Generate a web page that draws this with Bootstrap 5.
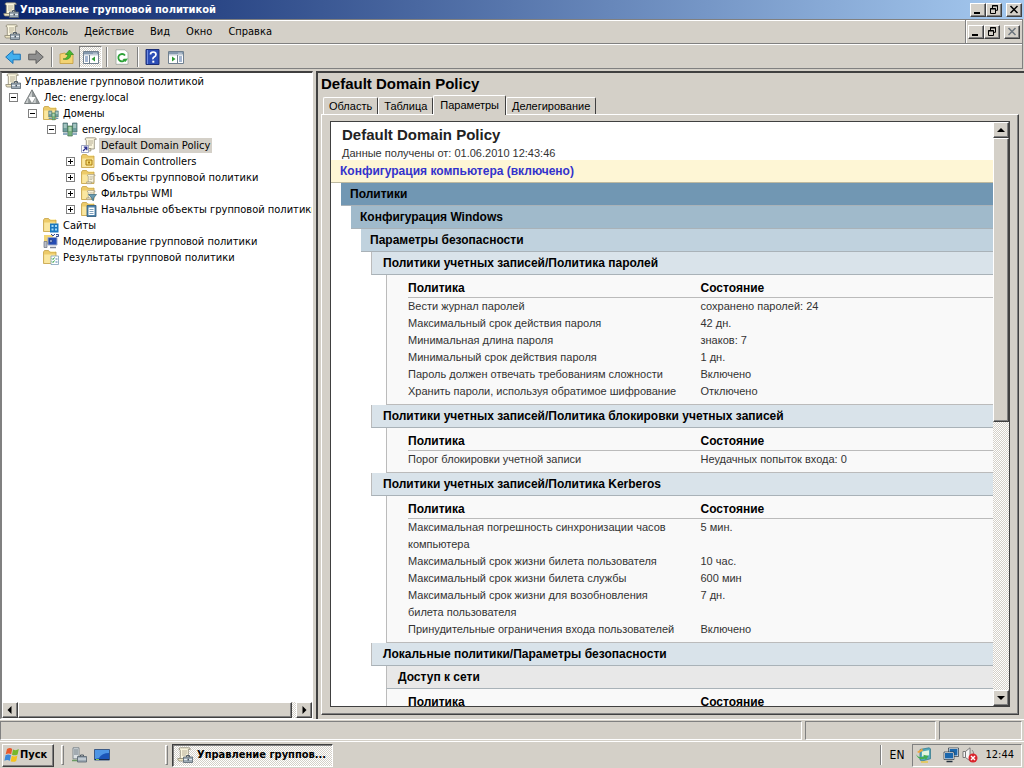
<!DOCTYPE html>
<html lang="ru">
<head>
<meta charset="utf-8">
<meta name="viewport" content="width=device-width, initial-scale=1">
<title>Управление групповой политикой</title>
<link href="https://cdn.jsdelivr.net/npm/bootstrap@5.3.0/dist/css/bootstrap.min.css" rel="stylesheet">
<style>
:root{--face:#d4d0c8;--shade:#808080;--deep:#404040;--ui:"DejaVu Sans Condensed","DejaVu Sans",sans-serif;--doc:"Liberation Sans",Arial,sans-serif}
body{font-family:var(--ui);font-size:11px;line-height:16px;color:#000;background:var(--face)}
body>*{flex-shrink:0}
button{font:inherit;color:inherit;background:none;border:0;padding:0;white-space:nowrap;text-align:left}
svg{display:block;flex:none}
.ico{width:16px;height:16px}
.raised{background:var(--face);border:1px solid;border-color:#fff var(--deep) var(--deep) #fff;box-shadow:inset -1px -1px 0 var(--shade)}
.dither{background:repeating-conic-gradient(#fff 0 25%,var(--face) 0 50%) 0 0/2px 2px}
.titlebar{height:19px;background:linear-gradient(90deg,#0a246a,#a6caf0);color:#fff;font-weight:bold;padding:0 2px 0 3px}
.titlebar span{margin-left:1px}
.winbtn{width:16px;height:14px;display:flex;align-items:center;justify-content:center}
.rebar{border-top:1px solid var(--shade);box-shadow:inset 0 1px 0 #fff;border-bottom:1px solid var(--shade);margin-right:1px;border-right:1px solid var(--shade)}
.menurow{height:24px;border-bottom:1px solid var(--shade);padding-left:4px}
.menurow nav{gap:16px;margin-left:5px}
.mdi{height:23px;border-left:1px solid var(--shade);padding:0 2px;box-shadow:inset 1px 0 0 #fff}
.toolrow{height:24px;border-top:1px solid #fff;padding-left:5px;gap:7px}
.toolgroup{gap:4px}
.pressed{width:23px;height:22px;padding-left:3px}
.vsep{width:2px;height:20px;border-left:1px solid var(--shade);border-right:1px solid #fff}
.toolrow .vsep{margin-right:-1px}
.pressed{border:1px solid;border-color:var(--shade) #fff #fff var(--shade)}
.panes{padding-top:2px;gap:3px;border-bottom:1px solid #fff}
.pane{border:2px solid;border-color:var(--deep) #fff #fff var(--shade)}
.treepane{flex:0 0 313px;background:#fff;border-width:2px 1px 1px 2px}
.tree{margin:0;padding:0;list-style:none;overflow:hidden}
.tree ul{list-style:none;margin:0;padding-left:19px}
.node{display:flex;align-items:center;height:16px;padding-left:7px}
.tree>li>.node{padding-left:3px}
.expander{width:9px;height:9px;border:1px solid var(--shade);display:flex;align-items:center;justify-content:center;margin-right:6px;flex:none;background:#fff}
.noexp{width:15px;flex:none}
.node .caption{padding:0 2px;margin-left:2px;height:15px;line-height:15px}
.node .caption.sel{background:var(--face)}
.hbar{height:16px}.sbtn{width:16px;height:16px;display:flex;align-items:center;justify-content:center;flex:none}
.detail{border-width:2px 0 0 2px;border-color:var(--deep);padding:0 5px 4px 3px}
.dochead{font:bold 15px/22px var(--doc);margin:0}
.tabs{font-family:var(--doc);padding-left:2px;height:19px}
.tabs button{height:17px;border:solid;border-width:1px 1px 0;border-color:#fff var(--deep) #fff #fff;border-radius:2px 2px 0 0;padding:0 5px;font-size:11px;line-height:15px}
.tabs button.active{height:20px;margin-bottom:-1px;padding:0 6px;background:var(--face);position:relative}
.tabpage{border:1px solid;border-color:#fff var(--deep) var(--deep) #fff;box-shadow:inset -1px -1px 0 var(--shade);padding:6px 8px 7px}
.viewer{border:1px solid var(--deep);background:#fff}
.vbar{width:16px}
.report{font:11px/17px var(--doc);color:#333;overflow:hidden}
.report h2{font:bold 15px/25px var(--doc);color:#222;margin:0 0 0 11px}
.stamp{margin:0 0 0 11px;line-height:13px}
.bar{height:23px;line-height:22px;font-weight:bold;font-size:12px;color:#000;border-bottom:1px solid #a9b2b8;margin:0;padding-left:9px}
.c0{background:#fef6d5;color:#3333cc;border-color:#bdb9a0}.c1{background:#7197b3;margin-left:10px}.c2{background:#a0bacb;margin-left:20px}.c3{background:#c0d2de;margin-left:30px}
.c4{background:#d9e3ea;margin-left:40px;padding-left:11px;border-left:1px solid #bbb}
.c5{background:#e8e8e8;margin-left:55px;padding-left:11px;border-left:1px solid #bbb}
.block{margin-left:55px;padding:4px 0 4px 21px;background:#f9f9f9;border-left:1px solid #bbb;border-bottom:1px solid #bbb}
.block table{width:100%;table-layout:fixed;border-collapse:separate;border-spacing:0}
.block th{height:19px;line-height:18px;padding:0;border-bottom:1px solid #bbb;color:#000;font-size:12px}
.block td{padding:0 20px 0 0;vertical-align:top;line-height:17px}
.statusbar{height:21px;gap:3px;padding:1px 2px 1px 0}
.cell{border:1px solid;border-color:var(--shade) #fff #fff var(--shade)}
.cell-mid{width:131px}.cell-end{width:83px}
.taskbar{height:27px;border-top:1px solid #fff;padding:0 2px}
.grip{width:3px;height:20px;border:1px solid;border-color:#fff var(--shade) var(--shade) #fff}
.start{width:52px;height:23px;font-weight:bold;padding-left:1px}
.quick{gap:7px;margin:0 55px 0 7px}
.launch{gap:4px}
.task{width:161px;height:23px;font-weight:bold;border:1px solid;border-color:var(--deep) #fff #fff var(--deep);box-shadow:inset 1px 1px 0 var(--shade);padding-left:4px}
.lang{font-size:12px;padding:0 8px}
.tray{height:23px;border:1px solid;border-color:var(--shade) #fff #fff var(--shade);padding:0 7px 0 3px;gap:3px}
</style>
</head>
<body class="vh-100 d-flex flex-column overflow-hidden">
<svg width="0" height="0" class="position-absolute" aria-hidden="true">
<defs>
<symbol id="scroll" viewBox="0 0 16 16"><path d="M3.500 .8h8.300q1.500 0 1.500 1.600h-2v9.600h-8V3.500q0-1-1.300-1Q2 .8 3.500.8z" fill="#fbf6df" stroke="#8b8674" stroke-width=".8"/><path d="M5 4h5M5 6h5M5 8h4" stroke="#a39c84" stroke-width=".8"/><path d="M.8 11.500h7v2.500H2Q.8 14 .8 11.500z" fill="#eee6c4" stroke="#8b8674" stroke-width=".8"/></symbol>
<symbol id="gpmc" viewBox="0 0 16 16"><use href="#scroll"/><path d="M9.500 10V8.500h3V10" fill="none" stroke="#4d5964"/><path d="M6.500 10h9v5.500h-9z" fill="#9daab5" stroke="#586570" stroke-width=".8"/><path d="M7 12.500h8" stroke="#e3e9ee"/><path d="M10.500 11.800h1.500v1.700h-1.500z" fill="#45515c"/></symbol>
<symbol id="gpolink" viewBox="0 0 16 16"><g transform="translate(2)"><use href="#scroll"/></g><path d="M.5 8.500h7v7h-7z" fill="#fff" stroke="#8a93b5" stroke-width=".8"/><path d="M2 14l3.300-3.300M2.800 10.200h3v3" fill="none" stroke="#2a2f8f" stroke-width="1.300"/></symbol>
<symbol id="forest" viewBox="0 0 16 16"><path d="M8 .8L15.500 14.500H.5z" fill="#8f9596" stroke="#666c6d" stroke-width=".8"/><path d="M8 2L8 8H4.800zM4.200 8.500V14H1.500zM11.800 8.500V14H9z" fill="#c9cdcd"/><path d="M4.500 8h7L8 14z" fill="#fff"/></symbol>
<symbol id="folder" viewBox="0 0 16 16"><path d="M.5 14.500V3l1-1.500h4l1.200 1.500H13v11.500z" fill="#edcb69" stroke="#c5a144" stroke-width=".8"/><path d="M1.200 14V5.500h11.200V14z" fill="#fae7a0"/><path d="M7.500 2.500h5" stroke="#fff4c6"/></symbol>
<symbol id="servers" viewBox="0 0 16 16"><path d="M1 2h4.500v9H1zM10.500 2H15v9h-4.500z" fill="#6f9e9c" stroke="#48676b" stroke-width=".7"/><path d="M5.800 5h4.500v10H5.800z" fill="#78b37d" stroke="#3f6f52" stroke-width=".7"/><path d="M1.700 4h3M1.700 6h3M11.200 4h3M11.200 6h3M6.500 7h3M6.500 9h3" stroke="#e5f4ec" stroke-width=".9"/><path d="M1 13h4.500M10.500 13H15" stroke="#6c93ad" stroke-width="1.600"/></symbol>
<symbol id="fdomains" viewBox="0 0 16 16"><use href="#folder"/><svg x="5" y="4" width="11" height="12"><use href="#servers"/></svg></symbol>
<symbol id="fou" viewBox="0 0 16 16"><use href="#folder"/><path d="M5 7h6v5H5z" fill="#f8df73" stroke="#a87b12"/><path d="M7 8.500h2v2H7z" fill="#a87b12"/></symbol>
<symbol id="fgpo" viewBox="0 0 16 16"><use href="#folder"/><svg x="5" y="5" width="11" height="11"><use href="#scroll"/></svg></symbol>
<symbol id="fwmi" viewBox="0 0 16 16"><use href="#fgpo"/><path d="M7.500 9.500h8l-3 3.500v2.800l-1.500-1V13z" fill="#6a9bb0" stroke="#3b6c83" stroke-width=".7"/></symbol>
<symbol id="fstarter" viewBox="0 0 16 16"><use href="#folder"/><path d="M6 4.500h9v11H6z" fill="#4e84ac" stroke="#2f5878" stroke-width=".8"/><path d="M7.500 6.500h6V14h-6z" fill="#fff"/><path d="M8.500 8.500h4M8.500 10.500h4M8.500 12.500h4" stroke="#5d88a9" stroke-width=".8"/></symbol>
<symbol id="fsites" viewBox="0 0 16 16"><use href="#folder"/><path d="M7 6.500h8.500v9H7z" fill="#1976bd"/><path d="M8.500 8h2v2h-2zM12 8h2v2h-2zM8.500 11.500h2v2h-2zM12 11.500h2v2h-2z" fill="#9dd7f8"/></symbol>
<symbol id="fmodel" viewBox="0 0 16 16"><path d="M1 2h9v9H1z" fill="#f2d576"/><path d="M5 4.500h9V12H5z" fill="#254cb4" stroke="#9ba7c6"/><path d="M8 1l2 2 2-2M13 1.500h2.500v2H13M7 6v4l3-2z" stroke="#233a80" fill="#dfe9ff" stroke-width=".9"/><path d="M1 8.500h3v6H1z" fill="#b9bec8" stroke="#687083" stroke-width=".7"/><path d="M7 14.500h6" stroke="#7d8495" stroke-width="1.500"/></symbol>
<symbol id="fresult" viewBox="0 0 16 16"><use href="#folder"/><path d="M8 7h7.500v8.500H8z" fill="#fff" stroke="#7fa0b7" stroke-width=".8"/><path d="M9 9.500l1 1 1.500-2M9 12.500l1 1 1.500-2" fill="none" stroke="#229a38"/><path d="M12.500 10h2M12.500 13h2" stroke="#4d79aa"/></symbol>
<symbol id="arrow" viewBox="0 0 16 16"><path d="M.7 8L8 1.500v3.700h7.300v5.600H8v3.700z" stroke-width="1"/></symbol>
<symbol id="upfolder" viewBox="0 0 16 16"><path d="M1 14.500V5l5-1 1.500 1.500H14v9z" fill="#f3d373" stroke="#c39c3c" stroke-width=".8"/><path d="M4 10q4 0 5-4.500H6.500L10.500 1l4 4.500H12Q11 12 4 10z" fill="#49b82f" stroke="#2c8522" stroke-width=".6"/></symbol>
<symbol id="winpane" viewBox="0 0 16 16"><path d="M.5 2.500h15v12H.5z" fill="#fff" stroke="#70808f"/><path d="M1 3h14v2.500H1z" fill="#8599ae"/><path d="M10.500 4.200h1M12.500 4.200h1" stroke="#fff"/><path d="M1 6h14" stroke="#c4ced8"/></symbol>
<symbol id="treeview" viewBox="0 0 16 16"><use href="#winpane"/><path d="M6.500 6v8" stroke="#70808f"/><path d="M2 8h3M2 10h3M2 12h3" stroke="#4a6da1"/><path d="M12 7.500v5L8.500 10z" fill="#2d9b34"/></symbol>
<symbol id="actionview" viewBox="0 0 16 16"><use href="#winpane"/><path d="M9.500 6v8" stroke="#70808f"/><path d="M11 8h3M11 10h3M11 12h3" stroke="#4a6da1"/><path d="M4 7.500v5L7.500 10z" fill="#2d9b34"/></symbol>
<symbol id="refresh" viewBox="0 0 16 16"><path d="M2 .8h9l3 3v11.500H2z" fill="#fff" stroke="#9aa59b" stroke-width=".8"/><path d="M11 6.500A3.700 3.700 0 1 0 11.500 10" fill="none" stroke="#2da137" stroke-width="1.800"/><path d="M8.500 10l5.500-.5-2.500 3.500z" fill="#2da137"/></symbol>
<symbol id="help" viewBox="0 0 16 16"><path d="M1 .5h13v15H1z" fill="#2c4db6" stroke="#1c2e76"/><path d="M2.500 1v14" stroke="#6f8ce0"/><path d="M5.500 5.500Q5.500 3 8.200 3T11 5.500Q11 7 9.200 8T8.300 10.200" fill="none" stroke="#fff" stroke-width="1.700"/><path d="M7.300 11.700h2v2h-2z" fill="#fff"/></symbol>
<symbol id="i-min" viewBox="0 0 10 9"><path d="M1 7h6v2H1z" fill="#000"/></symbol>
<symbol id="i-res" viewBox="0 0 10 9"><path d="M3.500 3V.5h5v4.800H7M3 1h6M1.500 3.500h5v5h-5zM1 4h6" fill="none" stroke="#000"/></symbol>
<symbol id="i-x" viewBox="0 0 10 9"><path d="M1.500 1l7 7M8.500 1l-7 7" stroke="currentColor" stroke-width="1.500"/></symbol>
<symbol id="flag" viewBox="0 0 16 16"><path d="M3 2q3-1.800 5.200 0L7.200 7.200q-2.700-1.500-5.500 0z" fill="#e8592b"/><path d="M9 2.500q3 1.500 5.800-.4l-1.200 5.400q-2.800 1.600-5.600.2z" fill="#77b72b"/><path d="M1.500 8.300q2.800-1.600 5.500 0l-1.100 5.400q-2.700-1.500-5.500 0z" fill="#3b88d8"/><path d="M7.800 8.800q2.800 1.400 5.600-.3l-1.200 5.400q-2.800 1.600-5.500.3z" fill="#f6c21c"/></symbol>
<symbol id="srvmgr" viewBox="0 0 16 16"><path d="M2 .8h6v11H2z" fill="#dce1e4" stroke="#6b767e" stroke-width=".8"/><path d="M3 3h4M3 5h4M3 7h4" stroke="#69757e"/><path d="M1 13.500h6" stroke="#6b9b63" stroke-width="1.500"/><path d="M9.500 9.500V8h3v1.500" fill="none" stroke="#4d5964"/><path d="M6.500 9.500h9v5.500h-9z" fill="#9daab5" stroke="#586570" stroke-width=".8"/><path d="M7 12h8" stroke="#e3e9ee"/></symbol>
<symbol id="desk" viewBox="0 0 16 16"><path d="M.5 2.500h15v10.500H.5z" fill="#1b55b8" stroke="#3d5b86"/><path d="M1 3h14v3Q8 6 5 11L1 12z" fill="#4e96e6"/><path d="M1 12.500h14" stroke="#1b2c4e"/><path d="M2 12.500h3" stroke="#7ec850"/></symbol>
<symbol id="vmtray" viewBox="0 0 16 16"><path d="M4 2.500l9-1.700 1.500 1v10L6 14l-2-1z" fill="#56a9bd" stroke="#2c7488" stroke-width=".7"/><path d="M6 4.500l7-1.300v5L6 9.500z" fill="#e5f6df"/><path d="M0 7q2 4.500 8 2.500l-.7-1.800 5 1.300-2.300 4-1-1.500Q2 14 0 7z" fill="#43ad53"/><path d="M1 5l5-3.500 1 2.300L3 6z" fill="#efa43b"/><path d="M5 15h7" stroke="#e8c84a" stroke-width="1.500"/></symbol>
<symbol id="net" viewBox="0 0 16 16"><path d="M6 1.500h9V9H6z" fill="#1b67ac" stroke="#fff"/><path d="M5.500 1h10v8.500h-10z" fill="none" stroke="#24303c" stroke-width=".7"/><path d="M1.500 5.500h9V12h-9z" fill="#1b67ac" stroke="#fff"/><path d="M1 5h10v7.500H1z" fill="none" stroke="#24303c" stroke-width=".7"/><path d="M3.500 14.500h6" stroke="#24303c" stroke-width="1.500"/></symbol>
<symbol id="mute" viewBox="0 0 16 16"><path d="M1 4.500h2.500L8 .8v13L3.500 10.500H1z" fill="#f5f5f5" stroke="#707070" stroke-width=".9"/><path d="M3.500 4.500v6" stroke="#777"/><path d="M10 3q2 2 1.500 4" fill="none" stroke="#888"/><circle cx="11" cy="11" r="4.500" fill="#d9242c"/><path d="M9 9l4 4M13 9l-4 4" stroke="#fff" stroke-width="1.400"/></symbol>
</defs>
</svg>

<header class="titlebar d-flex align-items-center">
  <svg class="ico"><use href="#gpmc"/></svg><span class="flex-grow-1">Управление групповой политикой</span>
  <button class="winbtn raised" aria-label="Свернуть"><svg width="10" height="9"><use href="#i-min"/></svg></button>
  <button class="winbtn raised" aria-label="Восстановить"><svg width="10" height="9"><use href="#i-res"/></svg></button>
  <button class="winbtn raised ms-1 text-black" aria-label="Закрыть"><svg width="10" height="9"><use href="#i-x"/></svg></button>
</header>

<div class="rebar">
  <div class="menurow d-flex align-items-center">
    <svg class="ico"><use href="#gpmc"/></svg>
    <nav class="d-flex flex-grow-1"><button>Консоль</button><button>Действие</button><button>Вид</button><button>Окно</button><button>Справка</button></nav>
    <div class="mdi d-flex align-items-center">
      <button class="winbtn raised" aria-label="Свернуть окно"><svg width="10" height="9"><use href="#i-min"/></svg></button>
      <button class="winbtn raised" aria-label="Восстановить окно"><svg width="10" height="9"><use href="#i-res"/></svg></button>
      <button class="winbtn raised ms-1 text-secondary" aria-label="Закрыть окно" disabled><svg width="10" height="9"><use href="#i-x"/></svg></button>
    </div>
  </div>
  <div class="toolrow d-flex align-items-center">
    <button aria-label="Назад"><svg class="ico" fill="#43b0ee" stroke="#1c72b4"><use href="#arrow"/></svg></button>
    <button aria-label="Вперед"><svg class="ico" fill="#8f8f8f" stroke="#5e5e5e"><g transform="translate(16) scale(-1 1)"><use href="#arrow" width="16" height="16"/></g></svg></button>
    <span class="vsep"></span>
    <div class="toolgroup d-flex align-items-center">
      <button aria-label="Вверх"><svg class="ico"><use href="#upfolder"/></svg></button>
      <button aria-label="Дерево консоли" class="pressed dither"><svg class="ico"><use href="#treeview"/></svg></button>
      <span class="vsep"></span>
    </div>
    <button aria-label="Обновить"><svg class="ico"><use href="#refresh"/></svg></button>
    <span class="vsep"></span>
    <button aria-label="Справка"><svg class="ico"><use href="#help"/></svg></button>
    <button aria-label="Панель действий"><svg class="ico"><use href="#actionview"/></svg></button>
  </div>
</div>

<main class="panes d-flex flex-grow-1 flex-shrink-1 overflow-hidden">
  <aside class="pane treepane d-flex flex-column overflow-hidden">
    <ul class="tree flex-grow-1">
      <li><div class="node"><svg class="ico"><use href="#gpmc"/></svg><button class="caption">Управление групповой политикой</button></div>
        <ul class="ps-0">
          <li><div class="node"><button class="expander" aria-label="Свернуть"><svg width="7" height="7"><path d="M1 3.500h5" stroke="#000"/></svg></button><svg class="ico"><use href="#forest"/></svg><button class="caption">Лес: energy.local</button></div>
            <ul>
              <li><div class="node"><button class="expander" aria-label="Свернуть"><svg width="7" height="7"><path d="M1 3.500h5" stroke="#000"/></svg></button><svg class="ico"><use href="#fdomains"/></svg><button class="caption">Домены</button></div>
                <ul>
                  <li><div class="node"><button class="expander" aria-label="Свернуть"><svg width="7" height="7"><path d="M1 3.500h5" stroke="#000"/></svg></button><svg class="ico"><use href="#servers"/></svg><button class="caption">energy.local</button></div>
                    <ul>
                      <li><div class="node"><span class="noexp"></span><svg class="ico"><use href="#gpolink"/></svg><button class="caption sel">Default Domain Policy</button></div></li>
                      <li><div class="node"><button class="expander" aria-label="Развернуть"><svg width="7" height="7"><path d="M1 3.500h5M3.500 1v5" stroke="#000"/></svg></button><svg class="ico"><use href="#fou"/></svg><button class="caption">Domain Controllers</button></div></li>
                      <li><div class="node"><button class="expander" aria-label="Развернуть"><svg width="7" height="7"><path d="M1 3.500h5M3.500 1v5" stroke="#000"/></svg></button><svg class="ico"><use href="#fgpo"/></svg><button class="caption">Объекты групповой политики</button></div></li>
                      <li><div class="node"><button class="expander" aria-label="Развернуть"><svg width="7" height="7"><path d="M1 3.500h5M3.500 1v5" stroke="#000"/></svg></button><svg class="ico"><use href="#fwmi"/></svg><button class="caption">Фильтры WMI</button></div></li>
                      <li><div class="node"><button class="expander" aria-label="Развернуть"><svg width="7" height="7"><path d="M1 3.500h5M3.500 1v5" stroke="#000"/></svg></button><svg class="ico"><use href="#fstarter"/></svg><button class="caption">Начальные объекты групповой политики</button></div></li>
                    </ul></li>
                </ul></li>
              <li><div class="node"><span class="noexp"></span><svg class="ico"><use href="#fsites"/></svg><button class="caption">Сайты</button></div></li>
              <li><div class="node"><span class="noexp"></span><svg class="ico"><use href="#fmodel"/></svg><button class="caption">Моделирование групповой политики</button></div></li>
              <li><div class="node"><span class="noexp"></span><svg class="ico"><use href="#fresult"/></svg><button class="caption">Результаты групповой политики</button></div></li>
            </ul></li>
        </ul></li>
    </ul>
    <div class="hbar d-flex dither flex-shrink-0">
      <button class="sbtn raised" aria-label="Влево"><svg width="8" height="8"><path d="M5.500 0v8l-4-4z"/></svg></button>
      <div class="raised flex-grow-1 me-1"></div>
      <button class="sbtn raised" aria-label="Вправо"><svg width="8" height="8"><path d="M2.500 0v8l4-4z"/></svg></button>
    </div>
  </aside>

  <section class="pane detail d-flex flex-column flex-grow-1 overflow-hidden">
    <h1 class="dochead">Default Domain Policy</h1>
    <div class="tabs d-flex align-items-end flex-shrink-0" role="tablist">
      <button role="tab">Область</button><button role="tab">Таблица</button><button role="tab" class="active" aria-selected="true">Параметры</button><button role="tab">Делегирование</button>
    </div>
    <div class="tabpage d-flex flex-grow-1 overflow-hidden">
      <div class="viewer d-flex flex-grow-1 overflow-hidden">
        <article class="report flex-grow-1">
          <h2>Default Domain Policy</h2>
          <p class="stamp">Данные получены от: 01.06.2010 12:43:46</p>
          <h3 class="bar c0">Конфигурация компьютера (включено)</h3>
          <h4 class="bar c1">Политики</h4>
          <h5 class="bar c2">Конфигурация Windows</h5>
          <h6 class="bar c3">Параметры безопасности</h6>
          <h6 class="bar c4">Политики учетных записей/Политика паролей</h6>
          <div class="block"><table>
            <thead><tr><th>Политика</th><th>Состояние</th></tr></thead>
            <tbody>
            <tr><td>Вести журнал паролей</td><td>сохранено паролей: 24</td></tr>
            <tr><td>Максимальный срок действия пароля</td><td>42 дн.</td></tr>
            <tr><td>Минимальная длина пароля</td><td>знаков: 7</td></tr>
            <tr><td>Минимальный срок действия пароля</td><td>1 дн.</td></tr>
            <tr><td>Пароль должен отвечать требованиям сложности</td><td>Включено</td></tr>
            <tr><td>Хранить пароли, используя обратимое шифрование</td><td>Отключено</td></tr>
            </tbody></table></div>
          <h6 class="bar c4">Политики учетных записей/Политика блокировки учетных записей</h6>
          <div class="block"><table>
            <thead><tr><th>Политика</th><th>Состояние</th></tr></thead>
            <tbody><tr><td>Порог блокировки учетной записи</td><td>Неудачных попыток входа: 0</td></tr></tbody></table></div>
          <h6 class="bar c4">Политики учетных записей/Политика Kerberos</h6>
          <div class="block"><table>
            <thead><tr><th>Политика</th><th>Состояние</th></tr></thead>
            <tbody>
            <tr><td>Максимальная погрешность синхронизации часов компьютера</td><td>5 мин.</td></tr>
            <tr><td>Максимальный срок жизни билета пользователя</td><td>10 час.</td></tr>
            <tr><td>Максимальный срок жизни билета службы</td><td>600 мин</td></tr>
            <tr><td>Максимальный срок жизни для возобновления билета пользователя</td><td>7 дн.</td></tr>
            <tr><td>Принудительные ограничения входа пользователей</td><td>Включено</td></tr>
            </tbody></table></div>
          <h6 class="bar c4">Локальные политики/Параметры безопасности</h6>
          <h6 class="bar c5">Доступ к сети</h6>
          <div class="block"><table><thead><tr><th>Политика</th><th>Состояние</th></tr></thead></table></div>
        </article>
        <div class="vbar d-flex flex-column flex-shrink-0 dither">
          <button class="sbtn raised" aria-label="Вверх"><svg width="8" height="8"><path d="M0 6h8l-4-4z"/></svg></button>
          <div class="flex-grow-1"><div class="raised" style="height:51.5%"></div></div>
          <button class="sbtn raised" aria-label="Вниз"><svg width="8" height="8"><path d="M0 2h8l-4 4z"/></svg></button>
        </div>
      </div>
    </div>
  </section>
</main>

<div class="statusbar d-flex">
  <div class="cell flex-grow-1"></div><div class="cell cell-mid"></div><div class="cell cell-end"></div>
</div>

<footer class="taskbar d-flex align-items-center">
  <button class="start raised d-flex align-items-center"><svg class="ico"><use href="#flag"/></svg>Пуск</button>
  <div class="quick d-flex align-items-center">
    <span class="grip"></span>
    <button aria-label="Диспетчер сервера"><svg class="ico"><use href="#srvmgr"/></svg></button>
    <button aria-label="Рабочий стол"><svg class="ico"><use href="#desk"/></svg></button>
  </div>
  <div class="launch d-flex align-items-center">
    <span class="grip"></span>
    <button class="task dither d-flex align-items-center gap-1"><svg class="ico"><use href="#gpmc"/></svg>Управление группов...</button>
  </div>
  <span class="vsep ms-auto"></span>
  <span class="lang">EN</span>
  <div class="tray d-flex align-items-center">
    <svg class="ico me-2"><use href="#vmtray"/></svg><svg class="ico"><use href="#net"/></svg><svg class="ico me-1"><use href="#mute"/></svg><time>12:44</time>
  </div>
</footer>
<script src="https://cdn.jsdelivr.net/npm/bootstrap@5.3.0/dist/js/bootstrap.bundle.min.js"></script>
</body>
</html>
